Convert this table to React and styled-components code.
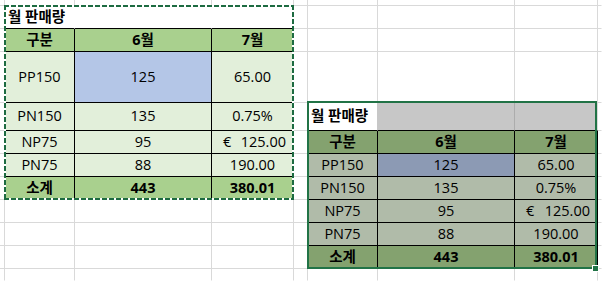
import React from 'react'
import styled, { createGlobalStyle } from 'styled-components'

// sheet geometry, px (each track includes its 1px gridline on the right / bottom)
const COLS = [5, 70, 137, 82, 14, 70, 137, 83, 4]
const ROWS = [6, 23, 23, 51, 28, 23, 23, 23, 23, 23, 23, 12]

const GRIDLINE = '#d9d9d9'
const INK = '#000'
const EXCEL_GREEN = '#217346'
const ANTS = '#1d6b41'

const TONES = {
  bright: {
    head: '#a9d08e',
    body: '#e2efda',
    pick: '#b4c6e7',
    blank: '#ffffff',
    titleSeam: '#ffffff',
    seam: '#ffffff',
  },
  dim: {
    head: '#84a26f',
    body: '#b0bba9',
    pick: '#8c9ab4',
    blank: '#c7c7c7',
    titleSeam: '#c7c7c7',
    seam: '#acacac',
  },
}

const sales = {
  title: '월 판매량',
  head: ['구분', '6월', '7월'],
  rows: [
    ['PP150', '125', '65.00'],
    ['PN150', '135', '0.75%'],
    ['NP75', '95', { cur: '€', val: '125.00' }],
    ['PN75', '88', '190.00'],
  ],
  total: ['소계', '443', '380.01'],
}

const TABLES = [
  { top: 1, left: 1, tone: 'bright' },
  { top: 4, left: 5, tone: 'dim' },
]

const key = (r, c) => `${r}:${c}`

function layoutSheet() {
  const cells = {}
  const boxed = new Set()

  TABLES.forEach(t => {
    const tone = TONES[t.tone]
    const put = (r, c, spec) => {
      cells[key(t.top + r, t.left + c)] = spec
    }

    put(0, 0, { fill: '#fff', text: sales.title, bold: true, align: 'left', right: tone.titleSeam })
    put(0, 1, { fill: tone.blank, right: tone.seam })
    put(0, 2, { fill: tone.blank })

    sales.head.forEach((h, i) => put(1, i, { fill: tone.head, text: h, bold: true, align: 'center' }))
    sales.rows.forEach((row, ri) =>
      row.forEach((v, i) =>
        put(2 + ri, i, {
          fill: ri === 0 && i === 1 ? tone.pick : tone.body,
          text: v,
          align: typeof v === 'object' ? 'split' : 'center',
        })
      )
    )
    sales.total.forEach((v, i) => put(6, i, { fill: tone.head, text: v, bold: true, align: 'center' }))

    for (let r = 1; r <= 6; r++) {
      for (let c = 0; c < 3; c++) boxed.add(key(t.top + r, t.left + c))
    }
  })

  const isBoxed = (r, c) => boxed.has(key(r, c))
  const out = []
  ROWS.forEach((_, r) => {
    COLS.forEach((__, c) => {
      const spec = cells[key(r, c)] || {}
      let right = isBoxed(r, c) || isBoxed(r, c + 1) ? INK : spec.right || GRIDLINE
      let bottom = isBoxed(r, c) || isBoxed(r + 1, c) ? INK : GRIDLINE
      if (c === COLS.length - 1) right = 'transparent'
      if (r === ROWS.length - 1) bottom = 'transparent'
      out.push({ r, c, fill: spec.fill || '#fff', right, bottom, ...spec })
    })
  })
  return out
}

const GlobalStyle = createGlobalStyle`
  html, body {
    margin: 0;
    padding: 0;
    background: #fff;
    overflow: hidden;
  }
  body {
    font-family: "Open Sans", "Noto Sans CJK KR", sans-serif;
  }
`

const Sheet = styled.div`
  display: grid;
  grid-template-columns: ${COLS.map(w => `${w}px`).join(' ')};
  grid-template-rows: ${ROWS.map(h => `${h}px`).join(' ')};
  width: 602px;
  height: 281px;
  overflow: hidden;
  background: #fff;
  color: #000;
  font-size: 14.5px;
`

const justify = { left: 'flex-start', center: 'center', split: 'space-between' }
const pad = { left: '0 3px', center: '0 3px', split: '0 7px 0 11px' }

const Cell = styled.div`
  grid-row: ${p => p.$r + 1};
  grid-column: ${p => p.$c + 1};
  box-sizing: border-box;
  display: flex;
  align-items: center;
  justify-content: ${p => justify[p.$align] || 'center'};
  padding: ${p => pad[p.$align] || '0'};
  min-width: 0;
  background: ${p => p.$fill};
  border-right: 1px solid ${p => p.$right};
  border-bottom: 1px solid ${p => p.$bottom};
  font-weight: ${p => (p.$bold ? 700 : 400)};
  white-space: nowrap;
  line-height: 1;
`

const dash = deg =>
  `repeating-linear-gradient(${deg}deg, ${ANTS} 0 5px, #fff 5px 7px)`

// copy marquee (marching ants) around A1:C7
const Marquee = styled.div`
  grid-row: ${p => p.$r + 1} / span ${p => p.$h};
  grid-column: ${p => p.$c + 1} / span ${p => p.$w};
  margin: -1px 0 0 -1px;
  pointer-events: none;
  background:
    ${dash(90)} left top / 100% 2px no-repeat,
    ${dash(90)} left bottom / 100% 2px no-repeat,
    ${dash(180)} left top / 2px 100% no-repeat,
    ${dash(180)} right top / 2px 100% no-repeat;
`

// selected picture frame around E4:G10
const Selection = styled.div`
  grid-row: ${p => p.$r + 1} / span ${p => p.$h};
  grid-column: ${p => p.$c + 1} / span ${p => p.$w};
  margin: -2px 1px 0 -1px;
  border: 2px solid ${EXCEL_GREEN};
  position: relative;
  pointer-events: none;
`

const Handle = styled.span`
  position: absolute;
  right: -4px;
  bottom: -5px;
  width: 5px;
  height: 5px;
  background: ${EXCEL_GREEN};
  border: 1px solid #fff;
`

const Cur = styled.span`
  font-weight: 400;
`

function CellText({ value }) {
  if (value && typeof value === 'object') {
    return (
      <>
        <Cur>{value.cur}</Cur>
        <span>{value.val}</span>
      </>
    )
  }
  return value || null
}

export default function App() {
  const cells = layoutSheet()
  return (
    <>
      <GlobalStyle />
      <Sheet>
        {cells.map(cell => (
          <Cell
            key={key(cell.r, cell.c)}
            $r={cell.r}
            $c={cell.c}
            $fill={cell.fill}
            $right={cell.right}
            $bottom={cell.bottom}
            $bold={cell.bold}
            $align={cell.align}
          >
            <CellText value={cell.text} />
          </Cell>
        ))}
        <Marquee $r={1} $c={1} $h={7} $w={3} />
        <Selection $r={4} $c={5} $h={7} $w={3}>
          <Handle />
        </Selection>
      </Sheet>
    </>
  )
}
